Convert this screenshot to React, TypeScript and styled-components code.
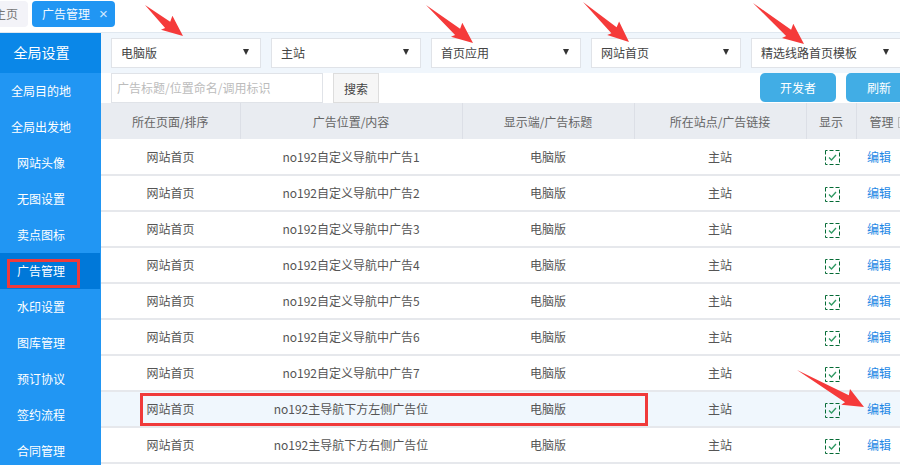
import React from "react";
import styled, { createGlobalStyle } from "styled-components";

const Global = createGlobalStyle`
  html, body { margin: 0; padding: 0; width: 900px; height: 465px; overflow: hidden; background: #fff; }
  body { font-family: "Noto Sans CJK SC", "Liberation Sans", sans-serif; font-size: 12px; color: #555; }
  * { box-sizing: border-box; }
`;

const Page = styled.div`
  position: relative;
  width: 900px;
  height: 465px;
  overflow: hidden;
  display: flex;
  flex-direction: column;
`;
const TabBar = styled.div`
  height: 33px;
  flex: none;
  display: flex;
  gap: 4px;
  padding-top: 1px;
  border-bottom: 1px solid #e0e8f0;
  margin-left: -24px;
`;
const Tab = styled.div<{ $active?: boolean }>`
  height: 26px;
  display: flex;
  align-items: center;
  padding: ${(p) => (p.$active ? "0 10px 2px" : "0 10px 2px 18px")};
  width: ${(p) => (p.$active ? "83px" : "52px")};
  gap: 9px;
  border-radius: 4px;
  white-space: nowrap;
  background: ${(p) => (p.$active ? "#2196f3" : "#f3f3f8")};
  color: ${(p) => (p.$active ? "#f4faff" : "#777")};
`;
const TabClose = styled.span`
  font-size: 15px;
  line-height: 1;
  padding-top: 1px;
  font-weight: 300;
  font-family: "Liberation Sans", sans-serif;
  color: #cfe8ff;
`;
const Body = styled.div`
  flex: 1;
  display: flex;
  min-height: 0;
`;
const Sidebar = styled.nav`
  width: 101px;
  flex: none;
  background: #2196f3;
  overflow: hidden;
`;
const SideTitle = styled.div`
  height: 40px;
  width: 101px;
  padding: 0 18px 2px 0;
  background: #0a87e8;
  display: flex;
  align-items: center;
  justify-content: center;
  color: #fff;
  font-size: 14px;
`;
const SideItem = styled.div<{ $active?: boolean }>`
  height: 36px;
  width: 100px;
  padding: 0 18px 2px 0;
  display: flex;
  align-items: center;
  justify-content: center;
  color: #fff;
  background: ${(p) => (p.$active ? "#0078d9" : "transparent")};
`;
const Main = styled.main`
  flex: 1;
  min-width: 0;
  overflow: hidden;
`;
const FilterBar = styled.div`
  height: 40px;
  padding: 5px 0 5px 10px;
  display: flex;
  gap: 10px;
  background: #f0f6fc;
`;
const Select = styled.div`
  flex: none;
  width: 150px;
  height: 30px;
  padding: 0 11px 2px 9px;
  display: flex;
  align-items: center;
  justify-content: space-between;
  background: #fff;
  border: 1px solid #e0e3e8;
  color: #444;
`;
const Caret = styled.span`
  width: 0;
  height: 0;
  border-left: 3.5px solid transparent;
  border-right: 3.5px solid transparent;
  border-top: 6px solid #333;
`;
const Toolbar = styled.div`
  height: 30px;
  padding-left: 10px;
  display: flex;
  align-items: flex-start;
`;
const SearchInput = styled.div`
  flex: none;
  width: 212px;
  height: 30px;
  padding: 0 0 1px 5px;
  display: flex;
  align-items: center;
  border: 1px solid #e0e3e8;
  color: #bcbcbc;
`;
const SearchButton = styled.div`
  flex: none;
  width: 46px;
  height: 30px;
  margin-left: 10px;
  display: flex;
  align-items: center;
  justify-content: center;
  background: #f6f6f6;
  border: 1px solid #ddd;
  color: #444;
`;
const ActionButton = styled.div<{ $gap: number; $width: number }>`
  flex: none;
  width: ${(p) => p.$width}px;
  height: 29px;
  margin-left: ${(p) => p.$gap}px;
  display: flex;
  align-items: center;
  justify-content: center;
  background: #41ade5;
  border-radius: 5px;
  color: #fff;
`;
const Table = styled.table`
  width: 801px;
  table-layout: fixed;
  border-collapse: collapse;
`;
const Head = styled.th`
  height: 36px;
  padding: 0;
  background: #e9ecf1;
  border-right: 1px solid #dcdfe6;
  color: #666;
  font-weight: 400;
  white-space: nowrap;
  &:last-child { border-right: 0; text-align: left; padding-left: 13px; }
`;
const HeadBox = styled.span`
  display: inline-block;
  width: 8px;
  height: 11px;
  margin-left: 4px;
  vertical-align: -1px;
  border: 1px solid #bbb;
`;
const Row = styled.tr<{ $on?: boolean }>`
  background: ${(p) => (p.$on ? "#f0f7fd" : "#fff")};
  border-bottom: 2px solid #e6e8ec;
`;
const Cell = styled.td`
  height: 36px;
  padding: 0 0 1px;
  text-align: center;
  color: #555;
  white-space: nowrap;
`;
const CheckIcon = styled.svg`
  display: inline-block;
  vertical-align: middle;
  margin-left: 2px;
`;
const EditLink = styled.a`
  color: #1e88e5;
  display: block;
  text-align: left;
  padding-left: 11px;
`;
const Annotations = styled.svg`
  position: absolute;
  left: 0;
  top: 0;
  pointer-events: none;
`;
const RedBox = styled.div<{ $x: number; $y: number; $w: number; $h: number }>`
  position: absolute;
  left: ${(p) => p.$x}px;
  top: ${(p) => p.$y}px;
  width: ${(p) => p.$w}px;
  height: ${(p) => p.$h}px;
  border: 3px solid #f03a3a;
  pointer-events: none;
`;

const menu = ["全局目的地", "全局出发地", "网站头像", "无图设置", "卖点图标", "广告管理", "水印设置", "图库管理", "预订协议", "签约流程", "合同管理"];
const selects = ["电脑版", "主站", "首页应用", "网站首页", "精选线路首页模板"];
const heads = [
  ["所在页面/排序", 139],
  ["广告位置/内容", 222],
  ["显示端/广告标题", 172],
  ["所在站点/广告链接", 172],
  ["显示", 50],
  ["管理", 46],
] as const;
const rows = [
  "no192自定义导航中广告1",
  "no192自定义导航中广告2",
  "no192自定义导航中广告3",
  "no192自定义导航中广告4",
  "no192自定义导航中广告5",
  "no192自定义导航中广告6",
  "no192自定义导航中广告7",
  "no192主导航下方左侧广告位",
  "no192主导航下方右侧广告位",
];

const arrows: [number, number, number, number][] = [
  [145, 5, 183, 36],
  [426, 5, 473, 43],
  [583, 2, 629, 42],
  [753, 3, 804, 44],
  [797, 370, 864, 407],
];

function arrowPoints([x1, y1, x2, y2]: [number, number, number, number]) {
  const len = Math.hypot(x2 - x1, y2 - y1);
  const ux = (x2 - x1) / len;
  const uy = (y2 - y1) / len;
  const at = (along: number, side: number) =>
    `${(x1 + ux * along - uy * side).toFixed(1)},${(y1 + uy * along + ux * side).toFixed(1)}`;
  const b = len - 19;
  return [at(0, 0), at(b, -3), at(b - 2, -9), at(len, 0), at(b - 2, 9), at(b, 5)].join(" ");
}

export default function App() {
  return (
    <Page>
      <Global />
      <TabBar>
        <Tab>主页</Tab>
        <Tab $active>
          广告管理
          <TabClose>×</TabClose>
        </Tab>
      </TabBar>
      <Body>
        <Sidebar>
          <SideTitle>全局设置</SideTitle>
          {menu.map((m) => (
            <SideItem key={m} $active={m === "广告管理"}>{m}</SideItem>
          ))}
        </Sidebar>
        <Main>
          <FilterBar>
            {selects.map((s) => (
              <Select key={s}>
                {s}
                <Caret />
              </Select>
            ))}
          </FilterBar>
          <Toolbar>
            <SearchInput>广告标题/位置命名/调用标识</SearchInput>
            <SearchButton>搜索</SearchButton>
            <ActionButton $gap={381} $width={76}>开发者</ActionButton>
            <ActionButton $gap={10} $width={66}>刷新</ActionButton>
          </Toolbar>
          <Table>
            <colgroup>
              {heads.map(([h, w]) => (
                <col key={h} width={w} />
              ))}
            </colgroup>
            <thead>
              <tr>
                {heads.map(([h]) => (
                  <Head key={h}>
                    {h}
                    {h === "管理" && <HeadBox />}
                  </Head>
                ))}
              </tr>
            </thead>
            <tbody>
              {rows.map((r, i) => (
                <Row key={r} $on={i === 7}>
                  <Cell>网站首页</Cell>
                  <Cell>{r}</Cell>
                  <Cell>电脑版</Cell>
                  <Cell>主站</Cell>
                  <Cell>
                    <CheckIcon width="15" height="15" viewBox="0 0 15 15" fill="none">
                      <rect x="0.5" y="0.5" width="14" height="14" stroke="#046a35" strokeDasharray="4 2" strokeDashoffset="2" />
                      <path d="M4 7.5 6.5 10 11 5" stroke="#2f9a63" strokeWidth="1.3" />
                    </CheckIcon>
                  </Cell>
                  <Cell>
                    <EditLink>编辑</EditLink>
                  </Cell>
                </Row>
              ))}
            </tbody>
          </Table>
        </Main>
      </Body>
      <RedBox $x={7} $y={259} $w={73} $h={29} />
      <RedBox $x={140} $y={393} $w={508} $h={33} />
      <Annotations width="900" height="465" viewBox="0 0 900 465">
        {arrows.map((a) => (
          <polygon key={a[0]} points={arrowPoints(a)} fill="#f53a3a" />
        ))}
      </Annotations>
    </Page>
  );
}
